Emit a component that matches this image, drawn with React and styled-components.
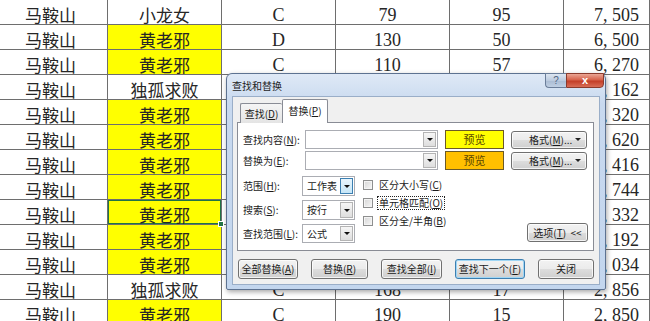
import React from "react";
import styled, { createGlobalStyle, css } from "styled-components";

const GlobalStyle = createGlobalStyle`
  html, body { margin: 0; padding: 0; background: #fff; }
  body { overflow: hidden; }
`;

const Page = styled.div`
  position: relative;
  width: 650px;
  height: 321px;
  overflow: hidden;
  background: #fff;
`;

const Sheet = styled.div`
  display: flex;
  flex-direction: column;
`;

const Row = styled.div`
  display: grid;
  grid-template-columns: 108px 114px 114px 114px 114px 1fr;
  height: 25px;
  flex: none;
  box-sizing: border-box;
  border-bottom: 1px solid #6e6e6e;
`;

const Cell = styled.div`
  position: relative;
  box-sizing: border-box;
  border-right: 1px solid #6e6e6e;
  display: flex;
  align-items: center;
  justify-content: ${(p) => (p.$align === "right" ? "flex-end" : "center")};
  padding-right: ${(p) => p.$pr || 0}px;
  padding-top: ${(p) => (p.$num ? 6 : 5)}px;
  background: ${(p) => (p.$fill ? "#ffff00" : "#fff")};
  color: #262626;
  font-family: ${(p) =>
    p.$num ? '"Liberation Serif", serif' : '"Noto Sans CJK SC", sans-serif'};
  font-size: ${(p) => (p.$num ? 18 : 17)}px;
  line-height: 1;
  white-space: nowrap;
  ${(p) =>
    p.$selected &&
    css`
      box-shadow: inset 0 0 0 1px #217346;
      &::after {
        content: "";
        position: absolute;
        right: -3px;
        bottom: -3px;
        width: 4px;
        height: 4px;
        background: #217346;
        border: 1px solid #fff;
        z-index: 1;
      }
    `}
`;

const Comma = styled.span`
  display: inline-block;
  width: 9px;
`;

/* ---------- dialog ---------- */

const Dialog = styled.div`
  position: absolute;
  left: 226px;
  top: 73px;
  width: 380px;
  height: 217px;
  box-sizing: border-box;
  border: 1px solid #5d7291;
  border-radius: 6px 6px 2px 2px;
  background: linear-gradient(#dfe9f6, #c8d9ef 30px, #c3d6ee);
  box-shadow: 1px 2px 5px rgba(0, 0, 0, 0.35);
  display: flex;
  flex-direction: column;
  padding: 0 5px 4px 5px;
  font-family: "Noto Sans CJK SC", sans-serif;
  font-size: 10px;
  color: #1a1a1a;
`;

const TitleBar = styled.div`
  height: 22px;
  flex: none;
  display: flex;
  justify-content: space-between;
  align-items: flex-start;
`;

const Title = styled.div`
  padding-top: 6px;
  line-height: 12px;
  color: #1e1e1e;
`;

const Captions = styled.div`
  display: flex;
  margin-top: -1px;
  margin-right: -4px;
`;

const CaptionButton = styled.div`
  height: 15px;
  box-sizing: border-box;
  display: flex;
  align-items: center;
  justify-content: center;
  font-family: "Liberation Sans", sans-serif;
  line-height: 1;
  ${(p) =>
    p.$close
      ? css`
          width: 38px;
          border: 1px solid #8a3a2c;
          border-radius: 0 0 4px 0;
          background: linear-gradient(#eaa594, #d6624b 45%, #c43e27 55%, #d86d56);
          color: #fff;
          font-weight: bold;
          font-size: 11px;
        `
      : css`
          width: 21px;
          border: 1px solid #6a7d99;
          border-right: none;
          border-radius: 0 0 0 4px;
          background: linear-gradient(#dde6f1, #bccbdf 50%, #a9bbd3 51%, #bfcfe3);
          color: #4f6481;
          font-size: 10px;
        `}
`;

const Body = styled.div`
  flex: 1;
  box-sizing: border-box;
  border: 1px solid #9aaec8;
  background: #f0f0f0;
  padding: 2px 5px 5px 4px;
  display: flex;
  flex-direction: column;
`;

const Tabs = styled.div`
  display: flex;
  align-items: flex-end;
  height: 24px;
  padding-left: 3px;
  margin-bottom: -1px;
  position: relative;
  z-index: 1;
`;

const Tab = styled.div`
  box-sizing: border-box;
  border: 1px solid #898c95;
  border-bottom: none;
  border-radius: 2px 2px 0 0;
  display: flex;
  align-items: center;
  justify-content: center;
  line-height: 1;
  white-space: nowrap;
  ${(p) =>
    p.$active
      ? css`
          width: 46px;
          height: 24px;
          background: #fff;
          padding-bottom: 2px;
        `
      : css`
          width: 42px;
          height: 20px;
          background: linear-gradient(#f5f5f5, #e4e4e4);
          border-right: none;
        `}
`;

const Panel = styled.div`
  box-sizing: border-box;
  border: 1px solid #898c95;
  background: #fff;
  padding: 7px 5px 7px 5px;
  display: flex;
  flex-direction: column;
`;

const FindGrid = styled.div`
  display: grid;
  grid-template-columns: 55px 133px 59px 76px;
  grid-auto-rows: 19px;
  column-gap: 7px;
  row-gap: 2px;
  align-items: center;
`;

const Label = styled.div`
  white-space: nowrap;
  line-height: 1;
`;

const Combo = styled.div`
  height: 100%;
  box-sizing: border-box;
  border: 1px solid #abadb3;
  background: #fff;
  padding: 1px;
  display: flex;
  align-items: stretch;
  justify-content: ${(p) => (p.$text ? "space-between" : "flex-end")};
`;

const ComboText = styled.span`
  display: flex;
  align-items: center;
  padding-left: 3px;
  line-height: 1;
`;

const ArrowBox = styled.div`
  width: 13px;
  box-sizing: border-box;
  display: flex;
  align-items: center;
  justify-content: center;
  border: 1px solid ${(p) => (p.$hot ? "#3c7fb1" : "#b4b4b4")};
  background: ${(p) =>
    p.$hot
      ? "linear-gradient(#e8f5fd, #c6e6f7)"
      : "linear-gradient(#f6f6f6, #dedede)"};
  &::before {
    content: "";
    border-left: 3px solid transparent;
    border-right: 3px solid transparent;
    border-top: 3px solid #111;
  }
`;

const Preview = styled.div`
  height: 100%;
  box-sizing: border-box;
  border: 1px solid #6b5a26;
  background: ${(p) => p.$bg};
  display: flex;
  align-items: center;
  justify-content: center;
  color: #5a4600;
  font-size: 11px;
  line-height: 1;
`;

const Button = styled.div`
  box-sizing: border-box;
  height: ${(p) => p.$h || 20}px;
  width: ${(p) => p.$w}px;
  border: 1px solid ${(p) => (p.$focus ? "#3c7fb1" : "#707070")};
  border-radius: 3px;
  background: linear-gradient(#f2f2f2 0%, #ebebeb 50%, #dddddd 51%, #cfcfcf 100%);
  box-shadow: inset 0 0 0 1px
    ${(p) => (p.$focus ? "#9fd6f5" : "rgba(255,255,255,0.75)")};
  display: flex;
  align-items: center;
  justify-content: ${(p) => (p.$split ? "space-between" : "center")};
  padding: ${(p) => (p.$split ? "0 5px 0 17px" : "0")};
  line-height: 1;
  white-space: nowrap;
  color: #1a1a1a;
`;

const SmallArrow = styled.span`
  border-left: 3px solid transparent;
  border-right: 3px solid transparent;
  border-top: 3px solid #222;
`;

const Lower = styled.div`
  display: flex;
  margin-top: 6px;
`;

const SelectGrid = styled.div`
  display: grid;
  grid-template-columns: 59px 53px;
  grid-template-rows: 20px 20px 19px;
  row-gap: 4px;
  align-items: center;
`;

const CheckCol = styled.div`
  display: flex;
  flex-direction: column;
  margin-left: 8px;
`;

const CheckRow = styled.div`
  height: 18px;
  display: flex;
  align-items: center;
  line-height: 1;
  white-space: nowrap;
`;

const Box = styled.span`
  width: 10px;
  height: 10px;
  box-sizing: border-box;
  border: 1px solid #8e8f8f;
  background: linear-gradient(135deg, #d6d6d6, #f7f7f7);
  box-shadow: inset 0 0 0 1px #f4f4f4;
  margin-right: 4px;
  flex: none;
`;

const CheckLabel = styled.span`
  padding: 1px;
  border: 1px dotted ${(p) => (p.$focus ? "#222" : "transparent")};
`;

const OptionsWrap = styled.div`
  margin-left: auto;
  align-self: flex-end;
  margin-bottom: 1px;
`;

const ButtonRow = styled.div`
  display: flex;
  justify-content: space-between;
  margin-top: 8px;
  padding-left: 1px;
`;

const data = [
  { name: "小龙女", hl: false, grade: "C", a: "79", b: "95", total: "7,505" },
  { name: "黄老邪", hl: true, grade: "D", a: "130", b: "50", total: "6,500" },
  { name: "黄老邪", hl: true, grade: "C", a: "110", b: "57", total: "6,270" },
  { name: "独孤求败", hl: false, grade: "C", a: "62", b: "51", total: "3,162" },
  { name: "黄老邪", hl: true, grade: "D", a: "80", b: "54", total: "4,320" },
  { name: "黄老邪", hl: true, grade: "C", a: "84", b: "55", total: "4,620" },
  { name: "黄老邪", hl: true, grade: "C", a: "151", b: "16", total: "2,416" },
  { name: "黄老邪", hl: true, grade: "D", a: "72", b: "52", total: "3,744" },
  { name: "黄老邪", hl: true, grade: "C", a: "124", b: "43", total: "5,332", sel: true },
  { name: "黄老邪", hl: true, grade: "C", a: "84", b: "38", total: "3,192" },
  { name: "黄老邪", hl: true, grade: "D", a: "74", b: "41", total: "3,034" },
  { name: "独孤求败", hl: false, grade: "C", a: "168", b: "17", total: "2,856" },
  { name: "黄老邪", hl: true, grade: "C", a: "190", b: "15", total: "2,850" },
];

function Total({ value }) {
  const [th, rest] = value.split(",");
  return (
    <span>
      {th}
      <Comma>,</Comma>
      {rest}
    </span>
  );
}

export default function App() {
  return (
    <Page>
      <GlobalStyle />
      <Sheet>
        {data.map((r, i) => (
          <Row key={i}>
            <Cell $pr={6}>马鞍山</Cell>
            <Cell $fill={r.hl} $selected={r.sel}>
              {r.name}
            </Cell>
            <Cell $num>{r.grade}</Cell>
            <Cell $num $pr={10}>
              {r.a}
            </Cell>
            <Cell $num $pr={10}>
              {r.b}
            </Cell>
            <Cell $num $align="right" $pr={10}>
              <Total value={r.total} />
            </Cell>
          </Row>
        ))}
      </Sheet>

      <Dialog>
        <TitleBar>
          <Title>查找和替换</Title>
          <Captions>
            <CaptionButton>?</CaptionButton>
            <CaptionButton $close>x</CaptionButton>
          </Captions>
        </TitleBar>
        <Body>
          <Tabs>
            <Tab>
              查找(<u>D</u>)
            </Tab>
            <Tab $active>
              替换(<u>P</u>)
            </Tab>
          </Tabs>
          <Panel>
            <FindGrid>
              <Label>
                查找内容(<u>N</u>):
              </Label>
              <Combo>
                <ArrowBox />
              </Combo>
              <Preview $bg="#ffff00">预览</Preview>
              <Button $w={76} $h={18} $split>
                <span>
                  格式(<u>M</u>)...
                </span>
                <SmallArrow />
              </Button>
              <Label>
                替换为(<u>E</u>):
              </Label>
              <Combo>
                <ArrowBox />
              </Combo>
              <Preview $bg="#ffc000">预览</Preview>
              <Button $w={76} $h={18} $split>
                <span>
                  格式(<u>M</u>)...
                </span>
                <SmallArrow />
              </Button>
            </FindGrid>
            <Lower>
              <SelectGrid>
                <Label>
                  范围(<u>H</u>):
                </Label>
                <Combo $text>
                  <ComboText>工作表</ComboText>
                  <ArrowBox $hot />
                </Combo>
                <Label>
                  搜索(<u>S</u>):
                </Label>
                <Combo $text>
                  <ComboText>按行</ComboText>
                  <ArrowBox />
                </Combo>
                <Label>
                  查找范围(<u>L</u>):
                </Label>
                <Combo $text>
                  <ComboText>公式</ComboText>
                  <ArrowBox />
                </Combo>
              </SelectGrid>
              <CheckCol>
                <CheckRow>
                  <Box />
                  <CheckLabel>
                    区分大小写(<u>C</u>)
                  </CheckLabel>
                </CheckRow>
                <CheckRow>
                  <Box />
                  <CheckLabel $focus>
                    单元格匹配(<u>O</u>)
                  </CheckLabel>
                </CheckRow>
                <CheckRow>
                  <Box />
                  <CheckLabel>
                    区分全/半角(<u>B</u>)
                  </CheckLabel>
                </CheckRow>
              </CheckCol>
              <OptionsWrap>
                <Button $w={61} $h={19}>
                  选项(<u>T</u>)&nbsp;&nbsp;&lt;&lt;
                </Button>
              </OptionsWrap>
            </Lower>
          </Panel>
          <ButtonRow>
            <Button $w={60}>
              全部替换(<u>A</u>)
            </Button>
            <Button $w={57}>
              替换(<u>R</u>)
            </Button>
            <Button $w={61}>
              查找全部(<u>I</u>)
            </Button>
            <Button $w={70} $focus>
              查找下一个(<u>F</u>)
            </Button>
            <Button $w={56}>关闭</Button>
          </ButtonRow>
        </Body>
      </Dialog>
    </Page>
  );
}
